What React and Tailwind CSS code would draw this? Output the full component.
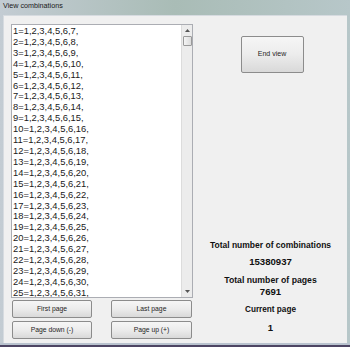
import React from 'react';

const rows = Array.from({ length: 25 }, (_, i) => `${i + 1}=1,2,3,4,5,6,${i + 7},`);

const WinButton = ({ children, className = '' }) => (
  <button
    className={`flex items-center justify-center border border-[#8c8c8c] rounded-[2px] bg-gradient-to-b from-[#f6f6f6] via-[#ececec] to-[#d9d9d9] text-[#1e1e1e] text-[6.8px] font-['Liberation_Sans',sans-serif] ${className}`}
  >
    {children}
  </button>
);

const App = () => {
  return (
    <div className="w-[350px] h-[347px] overflow-hidden flex flex-col bg-gradient-to-r from-[#c3ccd3] via-[#a9bcb6] to-[#b7c7c9] font-['Liberation_Sans',sans-serif]">
      {/* title bar */}
      <div className="h-[15px] shrink-0 flex items-center pl-[3px] pb-[2px]">
        <span className="text-[7.2px] text-[#1a1a1a]">View combinations</span>
      </div>

      {/* client area */}
      <div className="flex-1 flex pl-[3px] pr-[3px]">
        <div className="flex-1 flex bg-[#f0f0f0] border-t border-l border-[#d6dbe0]">
          {/* left column */}
          <div className="w-[190px] shrink-0 pl-[7px] pt-[8px] flex flex-col">
            {/* listbox */}
            <div className="w-[182px] h-[274px] flex bg-white border border-[#abadb3]">
              <div className="flex-1 pl-[1px] pt-[1px] text-[9.4px] leading-[10.9px] text-[#1a1a1a] overflow-hidden">
                {rows.map((r) => (
                  <div key={r}>{r}</div>
                ))}
              </div>
              {/* scrollbar */}
              <div className="w-[11px] shrink-0 flex flex-col items-center bg-[#ececec] border-l border-[#dcdcdc]">
                <div className="h-[11px] w-full flex items-center justify-center">
                  <svg width="5" height="3" viewBox="0 0 5 3">
                    <path d="M0 3 L2.5 0 L5 3 Z" fill="#555" />
                  </svg>
                </div>
                <div className="w-[9px] h-[10px] border border-[#9a9a9a] rounded-[1px] bg-gradient-to-r from-[#f4f4f4] to-[#dcdcdc]" />
                <div className="flex-1" />
                <div className="h-[11px] w-full flex items-center justify-center">
                  <svg width="5" height="3" viewBox="0 0 5 3">
                    <path d="M0 0 L2.5 3 L5 0 Z" fill="#555" />
                  </svg>
                </div>
              </div>
            </div>
            {/* buttons */}
            <div className="w-[182px] mt-[2px] px-[1px] flex flex-col gap-[3px]">
              <div className="flex justify-between">
                <WinButton className="w-[80px] h-[18px]">First page</WinButton>
                <WinButton className="w-[81px] h-[18px]">Last page</WinButton>
              </div>
              <div className="flex justify-between">
                <WinButton className="w-[80px] h-[18px]">Page down (-)</WinButton>
                <WinButton className="w-[81px] h-[18px]">Page up (+)</WinButton>
              </div>
            </div>
          </div>

          {/* right column */}
          <div className="flex-1 flex flex-col items-center pt-[20px] text-[#111]">
            <WinButton className="w-[63px] h-[37px] ml-[3px] text-[7px]">End view</WinButton>
            <div className="mt-[167px] text-[8.5px] leading-[11px] font-bold">Total number of combinations</div>
            <div className="mt-[5px] text-[9.6px] leading-[11px] font-bold">15380937</div>
            <div className="mt-[8px] text-[8.7px] leading-[11px] font-bold">Total number of pages</div>
            <div className="text-[9.6px] leading-[11px] font-bold">7691</div>
            <div className="mt-[7px] text-[8.2px] leading-[11px] font-bold">Current page</div>
            <div className="mt-[7px] text-[9.6px] leading-[11px] font-bold">1</div>
          </div>
        </div>
      </div>

      {/* bottom frame */}
      <div className="h-[2px] shrink-0 bg-[#b9c3cf]" />
      <div className="h-[2px] shrink-0 bg-[#4d4563]" />
    </div>
  );
};

export default App;
